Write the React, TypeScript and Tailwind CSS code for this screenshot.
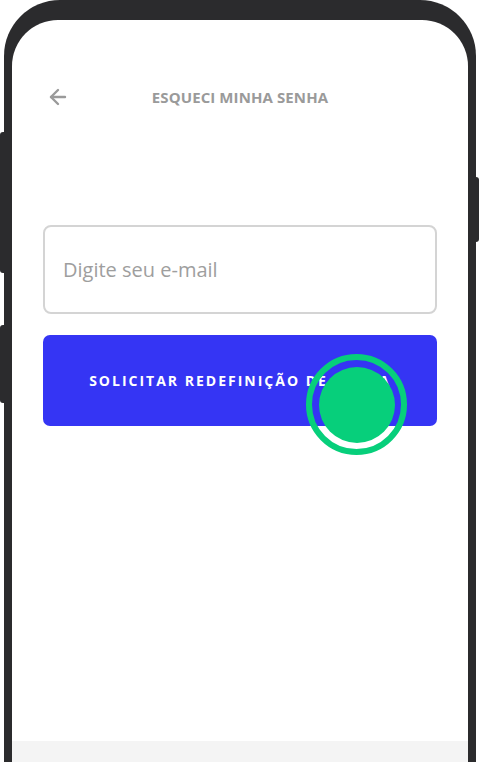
import React from "react";
import { ArrowLeft } from "lucide-react";

export default function App() {
  return (
    <div className="relative w-[480px] h-[762px] overflow-hidden bg-white" style={{ fontFamily: '"Open Sans", "Noto Sans", sans-serif' }}>
      {/* side buttons */}
      <div className="absolute left-0 top-[132px] w-[6px] h-[141px] rounded-l-[3px] bg-[#2b2b2d]" />
      <div className="absolute left-0 top-[325px] w-[6px] h-[78px] rounded-l-[3px] bg-[#2b2b2d]" />
      <div className="absolute right-[1px] top-[177px] w-[6px] h-[65px] rounded-r-[3px] bg-[#2b2b2d]" />

      <div className="ml-[4px] w-[472px] h-[782px] rounded-t-[56px] bg-[#2b2b2d] px-[8px] pt-[20px]">
        <div className="flex flex-col h-full rounded-t-[46px] bg-white overflow-hidden">
          <div className="px-[31px] flex-1">
            <div className="relative flex items-center justify-center h-[22px] mt-[66px]">
              <button className="absolute left-[3px] top-[-1px] text-[#9a9a9a]">
                <ArrowLeft size={24} strokeWidth={2.4} />
              </button>
              <h1 className="text-[15px] font-bold text-[#9a9a9a] tracking-[0.1px]">ESQUECI MINHA SENHA</h1>
            </div>

            <div className="mt-[117px] h-[89px] rounded-[8px] border-2 border-[#d4d4d4] flex items-center px-[18px]">
              <input
                placeholder="Digite seu e-mail"
                className="w-full outline-none text-[20px] text-[#333] placeholder:text-[#9e9e9e] bg-transparent"
              />
            </div>

            <button className="mt-[21px] w-full h-[91px] rounded-[7px] bg-[#3535f4] text-white text-[14px] font-bold tracking-[2px]">
              SOLICITAR REDEFINIÇÃO DE SENHA
            </button>
          </div>
          <div className="h-[41px] bg-[#f4f4f4] shrink-0" />
        </div>
      </div>

      {/* touch indicator */}
      <div className="absolute left-[306px] top-[354px] w-[101px] h-[101px] rounded-full border-[6px] border-[#07cf7b] flex items-center justify-center">
        <div className="w-[76px] h-[76px] rounded-full bg-[#07cf7b]" />
      </div>
    </div>
  );
}
